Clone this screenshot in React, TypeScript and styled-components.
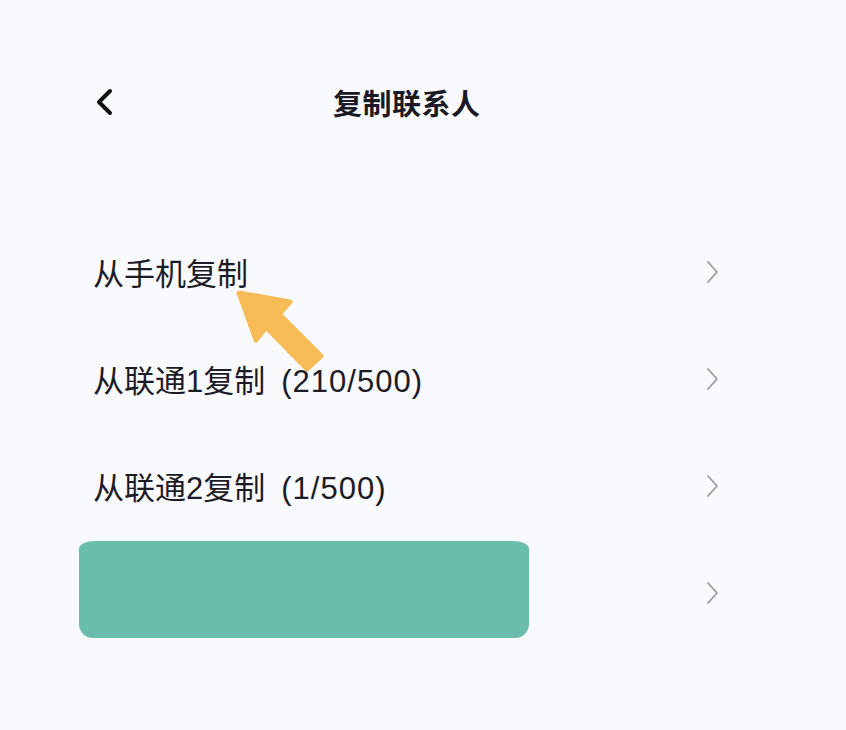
import styled, { createGlobalStyle } from 'styled-components';

const GlobalStyle = createGlobalStyle`
  html, body {
    margin: 0;
    padding: 0;
    background: #f9fafd;
  }
`;

const Page = styled.div`
  position: relative;
  width: 846px;
  height: 730px;
  overflow: hidden;
  background: #f9fafd;
  font-family: "Liberation Sans", "Noto Sans CJK SC", sans-serif;
  color: #1c1b26;
`;

const Header = styled.div`
  display: flex;
  align-items: center;
  height: 204px;
  padding-left: 96px;
  box-sizing: border-box;
`;

const BackButton = styled.div`
  width: 22px;
  height: 30px;
  display: flex;
  align-items: center;
`;

const Title = styled.div`
  margin-left: 215px;
  font-family: "Noto Sans CJK SC", sans-serif;
  font-size: 29px;
  font-weight: 700;
  letter-spacing: 0.5px;
  color: #1a1924;
`;

const List = styled.div`
  display: flex;
  flex-direction: column;
  padding: 14px 126px 0 93px;
`;

const Row = styled.div`
  display: flex;
  align-items: center;
  justify-content: space-between;
  height: 107px;
`;

const Label = styled.div`
  font-size: 31px;
  font-weight: 400;
  white-space: nowrap;
`;

const Count = styled.span`
  margin-left: 16px;
  letter-spacing: 1px;
`;

const Redacted = styled.div`
  width: 450px;
  height: 97px;
  margin-left: -14px;
  margin-top: -7px;
  background: #6bbdab;
  border-radius: 16px 16px 14px 14px / 8px 8px 14px 14px;
`;

const ArrowOverlay = styled.svg`
  position: absolute;
  left: 0;
  top: 0;
  pointer-events: none;
`;

function Chevron() {
  return (
    <svg width="14" height="24" viewBox="0 0 14 24">
      <path d="M2 2 L11 12 L2 22" fill="none" stroke="#9a9aa0" strokeWidth="1.8" strokeLinecap="round" strokeLinejoin="round" />
    </svg>
  );
}

const rows = [
  { name: '从手机复制' },
  { name: '从联通1复制', count: '(210/500)' },
  { name: '从联通2复制', count: '(1/500)' },
];

export default function App() {
  return (
    <Page>
      <GlobalStyle />
      <Header>
        <BackButton>
          <svg width="20" height="28" viewBox="0 0 20 28">
            <path d="M14 3 L3 14 L14 25" fill="none" stroke="#111" strokeWidth="4" strokeLinecap="round" strokeLinejoin="round" />
          </svg>
        </BackButton>
        <Title>复制联系人</Title>
      </Header>
      <List>
        {rows.map((r) => (
          <Row key={r.name}>
            <Label>
              {r.name}
              {r.count && <Count>{r.count}</Count>}
            </Label>
            <Chevron />
          </Row>
        ))}
        <Row>
          <Redacted />
          <Chevron />
        </Row>
      </List>
      <ArrowOverlay width="846" height="730" viewBox="0 0 846 730">
        <polygon
          points="239,293 290,302 279,314 321,356 307,369 266,327 256,340"
          fill="#f7bc57"
          stroke="#f7bc57"
          strokeWidth="5"
          strokeLinejoin="round"
        />
      </ArrowOverlay>
    </Page>
  );
}
